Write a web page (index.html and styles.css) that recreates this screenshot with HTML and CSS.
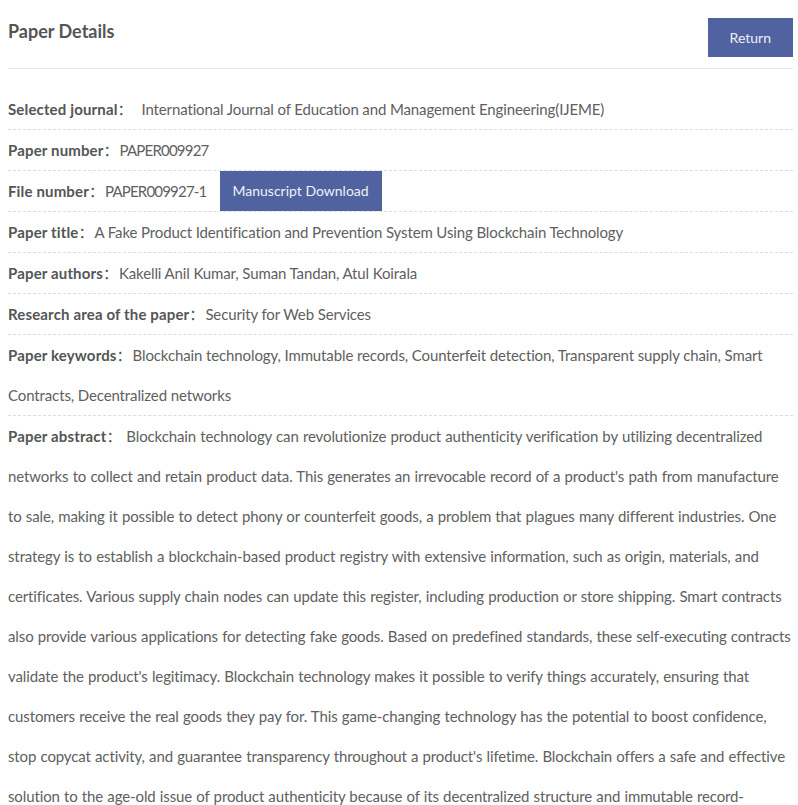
FILE: index.html
```html
<!DOCTYPE html>
<html lang="en">
<head>
<meta charset="utf-8">
<title>Paper Details</title>
<link rel="stylesheet" href="styles.css">
</head>
<body>
<div class="page">
  <div class="header">
    <h2 class="title">Paper Details</h2>
    <a class="btn btn-return" href="#">Return</a>
  </div>
  <div class="details">
    <div class="row"><span class="label">Selected journal<span class="colon">：</span></span> <span class="value value-gap">International Journal of Education and Management Engineering(IJEME)</span></div>
    <div class="row"><span class="label">Paper number<span class="colon">：</span></span><span class="value num">PAPER009927</span></div>
    <div class="row"><span class="label">File number<span class="colon">：</span></span><span class="value num">PAPER009927-1</span><a class="btn btn-download" href="#">Manuscript Download</a></div>
    <div class="row"><span class="label">Paper title<span class="colon">：</span></span><span class="value">A Fake Product Identification and Prevention System Using Blockchain Technology</span></div>
    <div class="row"><span class="label">Paper authors<span class="colon">：</span></span><span class="value">Kakelli Anil Kumar, Suman Tandan, Atul Koirala</span></div>
    <div class="row"><span class="label">Research area of the paper<span class="colon">：</span></span><span class="value">Security for Web Services</span></div>
    <div class="row"><span class="label">Paper keywords<span class="colon">：</span></span><span class="value">Blockchain technology, Immutable records, Counterfeit detection, Transparent supply chain, Smart Contracts, Decentralized networks</span></div>
    <div class="row"><span class="label">Paper abstract<span class="colon">：</span></span> <span class="value abstract">Blockchain technology can revolutionize product authenticity verification by utilizing decentralized networks to collect and retain product data. This generates an irrevocable record of a product's path from manufacture to sale, making it possible to detect phony or counterfeit goods, a problem that plagues many different industries. One strategy is to establish a blockchain-based product registry with extensive information, such as origin, materials, and certificates. Various supply chain nodes can update this register, including production or store shipping. Smart contracts also provide various applications for detecting fake goods. Based on predefined standards, these self-executing contracts validate the product's legitimacy. Blockchain technology makes it possible to verify things accurately, ensuring that customers receive the real goods they pay for. This game-changing technology has the potential to boost confidence, stop copycat activity, and guarantee transparency throughout a product's lifetime. Blockchain offers a safe and effective solution to the age-old issue of product authenticity because of its decentralized structure and immutable record-keeping capabilities.</span></div>
  </div>
</div>
</body>
</html>
```
FILE: styles.css
```css
html, body {
  margin: 0;
  padding: 0;
  background: #fff;
}
body {
  padding: 8px;
  font-family: Lato, "Liberation Sans", "Noto Sans CJK SC", sans-serif;
  font-size: 15px;
  color: #606060;
}
.page {
  width: 785px;
}
.header {
  display: flex;
  justify-content: space-between;
  align-items: flex-start;
  padding-bottom: 11px;
  border-bottom: 1px solid #e8e8e8;
}
.title {
  margin: 0;
  font-size: 18px;
  font-weight: 700;
  line-height: 46px;
  color: #555;
}
.btn {
  display: inline-block;
  background: #5063a0;
  color: #eef0f7;
  text-decoration: none;
  font-size: 14px;
}
.btn-return {
  margin-top: 10px;
  height: 39px;
  line-height: 39px;
  padding: 0 22px;
}
.btn-download {
  height: 40px;
  line-height: 40px;
  padding: 0 13px;
  margin-left: 13px;
  vertical-align: top;
}
.details {
  margin-top: 20px;
}
.row {
  line-height: 40px;
  border-bottom: 1px dashed #dcdcdc;
}
.row:last-child {
  border-bottom: none;
}
.label {
  font-weight: 700;
  color: #555;
  letter-spacing: 0.15px;
}
.colon {
  font-family: "Noto Sans CJK SC", sans-serif;
  font-weight: 400;
  letter-spacing: 0;
  margin-right: 1px;
}
.value {
  letter-spacing: -0.12px;
}
.abstract {
  word-spacing: 0.5px;
}
.value-gap {
  margin-left: 4px;
}
.num {
  letter-spacing: -0.8px;
}
```
